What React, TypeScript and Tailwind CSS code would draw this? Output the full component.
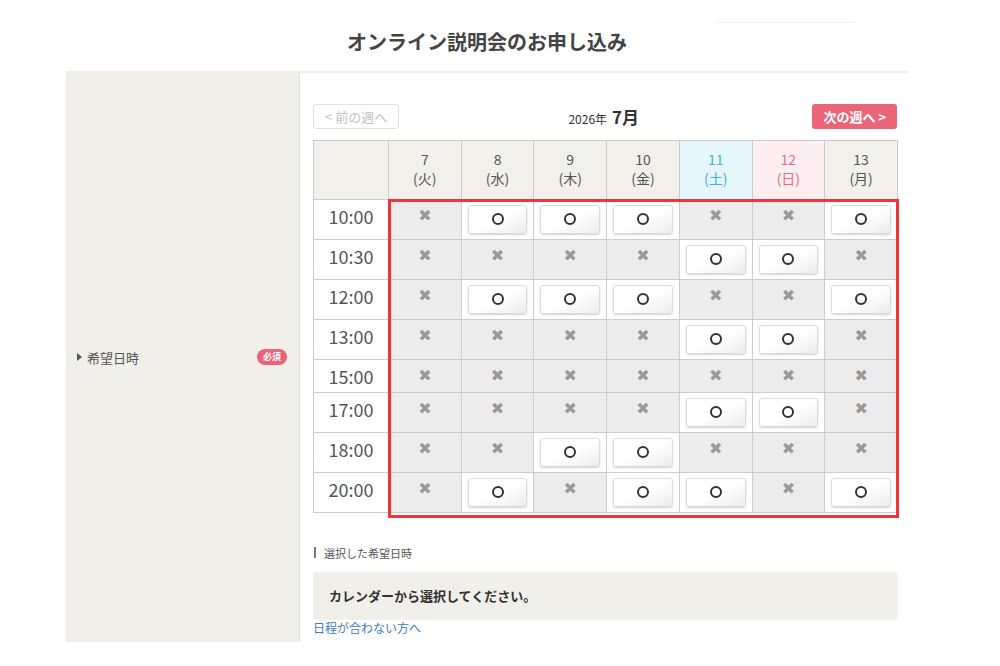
// Reservation calendar: pick a seminar date/time from a weekly grid.

const FONT = { fontFamily: '"Noto Sans CJK JP", "Noto Sans", sans-serif' };

type Day = { date: string; week: string; kind: "" | "sat" | "sun" };

const DAYS: Day[] = [
  { date: "7", week: "火", kind: "" },
  { date: "8", week: "水", kind: "" },
  { date: "9", week: "木", kind: "" },
  { date: "10", week: "金", kind: "" },
  { date: "11", week: "土", kind: "sat" },
  { date: "12", week: "日", kind: "sun" },
  { date: "13", week: "月", kind: "" },
];

// o = open slot, x = full
const SLOTS: [string, string][] = [
  ["10:00", "xoooxxo"],
  ["10:30", "xxxxoox"],
  ["12:00", "xoooxxo"],
  ["13:00", "xxxxoox"],
  ["15:00", "xxxxxxx"],
  ["17:00", "xxxxoox"],
  ["18:00", "xxooxxx"],
  ["20:00", "xoxooxo"],
];

function HeadCell({ day }: { day: Day }) {
  const tone =
    day.kind === "sat"
      ? "bg-[#e6f6fb] text-[#3ab4da]"
      : day.kind === "sun"
        ? "bg-[#fdeef1] text-[#ea6a7e]"
        : "bg-[#f2f0eb] text-[#555]";
  return (
    <th
      className={[
        "border border-[#cccccc] pt-[9px] pb-[11px] text-center text-[14px] font-normal leading-[19px]",
        tone,
      ].join(" ")}
    >
      <div>{day.date}</div>
      <div>({day.week})</div>
    </th>
  );
}

function SlotCell({ open }: { open: boolean }) {
  if (!open) {
    return (
      <td className="border border-[#cccccc] bg-[#ececec] py-[5px] text-center align-top">
        <span
          className="block text-[16px] leading-[22px] text-[#9a9a9a]"
          style={{ fontFamily: '"DejaVu Sans", sans-serif' }}
        >
          ✖
        </span>
      </td>
    );
  }
  return (
    <td className="border border-[#cccccc] bg-white px-[6px] py-[5px] align-top">
      <button
        type="button"
        className={[
          "flex h-[29px] w-full items-center justify-center rounded-[3px]",
          "border border-[#dcdcdc] bg-gradient-to-br from-white from-50% to-[#ececec]",
          "shadow-[0_1px_2px_rgba(0,0,0,0.18)]",
        ].join(" ")}
      >
        <span className="block h-[12px] w-[12px] rounded-full border-2 border-[#333]" />
      </button>
    </td>
  );
}

export default function App() {
  return (
    <div className="min-h-[666px] bg-white text-[#333]" style={FONT}>
      <div className="ml-[66px] w-[842px]">
        {/* Header */}
        <header className="relative flex h-[73px] items-end justify-center border-b-2 border-[#f0eee9] pb-[15px]">
          <h1 className="text-[20px] font-bold leading-[28px] text-[#444]">
            オンライン説明会のお申し込み
          </h1>
          <div className="absolute left-[650px] top-[22px] h-px w-[139px] bg-[#fcedf0]" />
        </header>

        <div className="flex">
          {/* Label column */}
          <aside className="flex w-[234px] shrink-0 items-center border-r border-[#e2dfd8] bg-[#f1efea] pl-[11px] pr-[12px]">
            <span className="mr-[5px] h-0 w-0 border-y-[4px] border-l-[5px] border-y-transparent border-l-[#555]" />
            <span className="text-[13px] text-[#555]">希望日時</span>
            <span className="ml-auto rounded-full bg-[#e9637a] px-[6px] text-[9px] font-bold leading-[16px] text-white">
              必須
            </span>
          </aside>

          {/* Calendar */}
          <main className="pl-[13px] pr-[10px] pt-[31px] pb-[6px]">
            <div className="flex w-[585px] items-center justify-between">
              <button
                type="button"
                className="h-[25px] rounded-[3px] border border-[#e2e2e2] px-[11px] text-[13px] text-[#c2c2c2]"
              >
                &lt; 前の週へ
              </button>
              <div className="flex items-baseline gap-[5px] pr-[4px]">
                <span className="text-[12px] text-[#333]">2026年</span>
                <span className="text-[17px] font-bold text-[#333]">7月</span>
              </div>
              <button
                type="button"
                className="mr-[1px] h-[25px] rounded-[3px] bg-[#ec6478] px-[11px] text-[13px] font-bold text-white"
              >
                次の週へ &gt;
              </button>
            </div>

            <div className="relative mt-[10px] w-[585px]">
              <table className="w-full table-fixed border-collapse border border-[#c8c8c8]">
                <colgroup>
                  <col className="w-[75px]" />
                  {DAYS.map((d) => (
                    <col key={d.date} />
                  ))}
                </colgroup>
                <thead>
                  <tr>
                    <th className="border border-[#cccccc] bg-[#f2f0eb]" />
                    {DAYS.map((d) => (
                      <HeadCell key={d.date} day={d} />
                    ))}
                  </tr>
                </thead>
                <tbody>
                  {SLOTS.map(([time, row]) => (
                    <tr key={time}>
                      <td className="border border-[#cccccc] bg-white py-[5px] text-center align-top text-[18px] leading-[22px] text-[#555]">
                        {time}
                      </td>
                      {row.split("").map((c, i) => (
                        <SlotCell key={i} open={c === "o"} />
                      ))}
                    </tr>
                  ))}
                </tbody>
              </table>
              {/* selectable area highlight */}
              <div className="pointer-events-none absolute left-[75px] top-[59px] h-[319px] w-[511px] border-[3px] border-[#f2333b]" />
            </div>

            <p className="mt-[31px] flex items-center text-[11px] leading-[18px] text-[#555]">
              <span className="mr-[8px] ml-[1px] h-[11px] w-[2px] bg-[#777]" />
              選択した希望日時
            </p>
            <div className="mt-[10px] flex h-[48px] w-[585px] items-center rounded-[3px] bg-[#f1efea] pl-[16px]">
              <span className="text-[13px] font-bold text-[#333]">カレンダーから選択してください。</span>
            </div>
            <a href="#" className="block text-[12px] leading-[16px] text-[#3a7bc0]">
              日程が合わない方へ
            </a>
          </main>
        </div>
      </div>
    </div>
  );
}
